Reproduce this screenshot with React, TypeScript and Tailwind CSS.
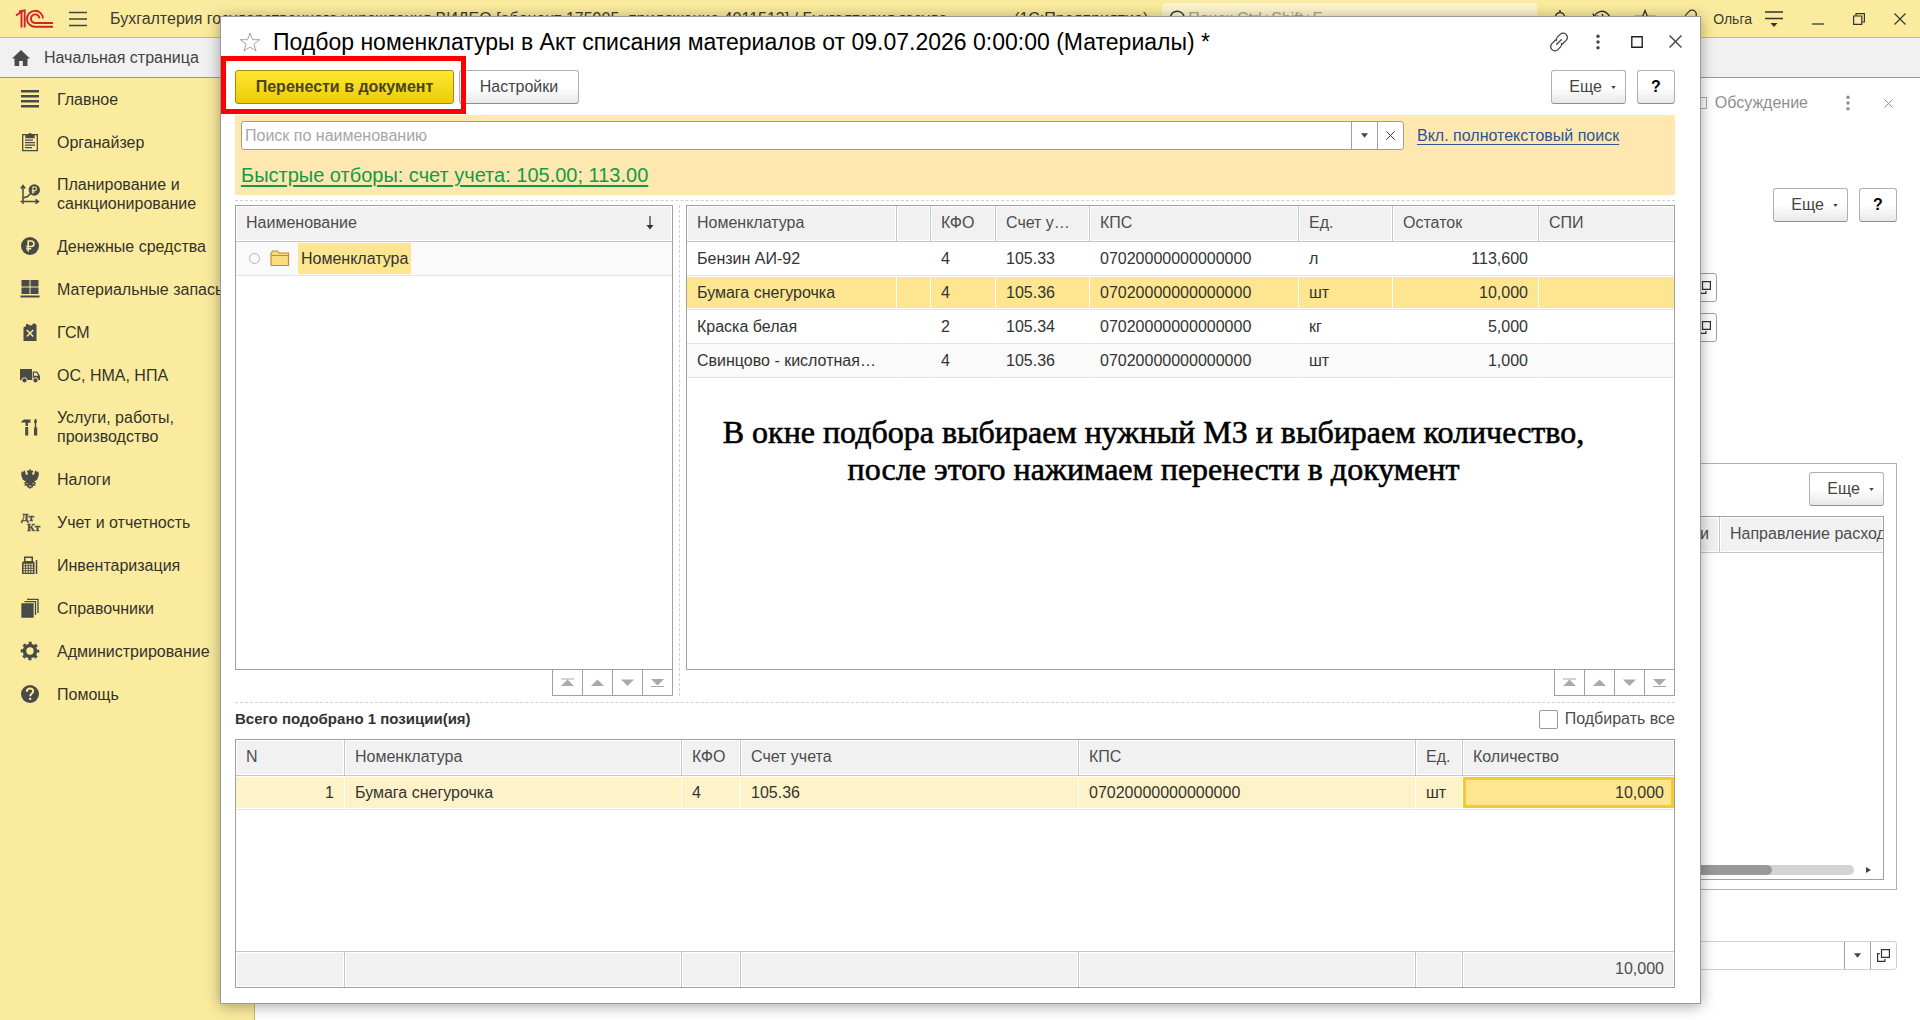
import React, { useState } from 'react';
import clsx from 'clsx';

interface MenuItem {
  label: string;
  icon: React.ReactNode;
}

interface Column {
  title: string;
  width?: string;
  right?: boolean;
}

const INK = '#4a4a46';

const MENU: MenuItem[] = [
  { label: 'Главное', icon: <path d="M1 2.2h18M1 7.2h18M1 12.2h18M1 17.2h18" stroke={INK} strokeWidth="2.4" /> },
  {
    label: 'Органайзер',
    icon: (
      <g fill="none" stroke={INK} strokeWidth="1.3">
        <path d="M2.7 2.7h14.6v16H2.7z" />
        <path d="M5 8.2h8M5 10.7h10M5 13.2h10M5 15.7h7" strokeWidth="1.2" />
        <path d="M6 5.5V2.8h2.4a1.7 1.7 0 0 1 3.2 0H14v2.7z" fill={INK} />
      </g>
    ),
  },
  {
    label: 'Планирование и санкционирование',
    icon: (
      <g fill="none" stroke={INK} strokeWidth="1.5">
        <path d="M3 20V2M.8 4.5 3 1.500l2.200 3M.5 17.500H18M15.500 15.300l3 2.200-3 2.200M3 14l4.500-1.500L11 9" />
        <circle cx="14.300" cy="6" r="5.700" fill={INK} stroke="none" />
        <path d="M12.900 9.500V3h1.900a1.700 1.700 0 0 1 0 3.500h-3M11.800 8h3" stroke="#fbeb9e" strokeWidth="1.100" />
      </g>
    ),
  },
  {
    label: 'Денежные средства',
    icon: (
      <g>
        <circle cx="10" cy="10" r="9" fill={INK} />
        <path d="M8.200 15.500V5h3a2.700 2.700 0 0 1 0 5.500H6.200M6.200 12.800h5" fill="none" stroke="#fbeb9e" strokeWidth="1.600" />
      </g>
    ),
  },
  {
    label: 'Материальные запасы',
    icon: <path d="M1.500 1h8v6.500h-8zM10.500 1h8v6.500h-8zM1.500 8.500h8V15h-8zM10.500 8.500h8V15h-8zM.5 16.500h19v2H.5z" fill={INK} />,
  },
  {
    label: 'ГСМ',
    icon: (
      <g>
        <path d="M3.500 5.500 5 4.500h1V2h2l1 1.300h3L13 1.500h2L16.500 3v16h-13z" fill={INK} />
        <path d="m6.800 8 6.400 6.500M13.200 8l-6.400 6.500" stroke="#fbeb9e" strokeWidth="1.500" />
      </g>
    ),
  },
  {
    label: 'ОС, НМА, НПА',
    icon: (
      <g fill={INK}>
        <path d="M0 4h12v11H0zM12.700 6.500h4.600L20 11v4h-7.300z" />
        <path d="M14 7.700h2.600l1.700 3H14z" fill="#fbeb9e" />
        <circle cx="4.500" cy="15.300" r="2.600" stroke="#fbeb9e" />
        <circle cx="15.500" cy="15.300" r="2.600" stroke="#fbeb9e" />
      </g>
    ),
  },
  {
    label: 'Услуги, работы, производство',
    icon: (
      <g fill={INK}>
        <path d="M1 5.500C2 3 4 2.500 6 2.500h4.500v3.300H8V9H5.500V5.500z" />
        <path d="M5.200 10h3v8.500h-3zM14.800 2h1.600l.6 3-.8 1.500V11h-1.400V6.500L14 5z" />
        <path d="M14 10.500h3.200v8H14z" />
      </g>
    ),
  },
  {
    label: 'Налоги',
    icon: (
      <g fill={INK}>
        <path d="M9.400 0h1.200v1.500h1.900l1 1.400-1.300.7.300 2.400 1.700-.6.5-2.400 1-2 .6 2 .9-1.500.4 2 1.100-1v4l-1.600 4.200-3.100 2 2.500 1.300-1.800.9 1.300 1.900-2.500-.4-1 2.100-1.300.3-1.200 1.200-1.200-1.200-1.300-.3-1-2.100-2.500.4 1.300-1.900-1.800-.9L6 12.700l-3.100-2L1.300 6.500v-4l1.100 1 .4-2 .9 1.500.6-2 1 2 .5 2.400 1.700.6.3-2.400-1.300-.7 1-1.400h1.900z" />
        <path d="M6.200 14.500h1.300M12.500 14.500h1.300M8.500 17h3" stroke="#fbeb9e" strokeWidth=".8" />
      </g>
    ),
  },
  {
    label: 'Учет и отчетность',
    icon: (
      <g fill={INK} stroke={INK} strokeWidth=".3" fontFamily="Liberation Serif, serif" fontWeight="bold" fontSize="11">
        <text x="1" y="9">Дт</text>
        <text x="7" y="19">Кт</text>
      </g>
    ),
  },
  {
    label: 'Инвентаризация',
    icon: (
      <g>
        <path d="M2 7.500 4 6V1.500h9V6l1.500 1.500V19H2z" fill={INK} />
        <path d="M5.500 3h6v3h-6z" fill="#fbeb9e" />
        <path d="M3.500 9.500h9.500M3.500 12h9.500M3.500 14.500h9.500M3.500 17h9.500" stroke="#fbeb9e" strokeWidth="1.400" strokeDasharray="1.700 .9" />
        <path d="M16.500 5v14" stroke={INK} strokeWidth="1.500" />
      </g>
    ),
  },
  {
    label: 'Справочники',
    icon: (
      <g fill="none" stroke={INK} strokeWidth="1.300">
        <path d="M2 6h11v13H2z" fill={INK} />
        <path d="M4.500 3.700h11V17M7 1.400h11V15" />
      </g>
    ),
  },
  {
    label: 'Администрирование',
    icon: (
      <g fill="none" stroke={INK}>
        <circle cx="10" cy="10" r="5.500" strokeWidth="3.600" />
        <circle cx="10" cy="10" r="8.100" strokeWidth="2.400" strokeDasharray="3.180 3.180" strokeDashoffset="1.590" />
      </g>
    ),
  },
  {
    label: 'Помощь',
    icon: (
      <g>
        <circle cx="10" cy="10" r="9" fill={INK} />
        <path d="M6.800 7.800c0-4.300 6.400-4.200 6.400-.6 0 2.300-3 2.400-3 5M10.200 13.800v2.200" fill="none" stroke="#fbeb9e" strokeWidth="2" />
      </g>
    ),
  },
];

const STOCK_COLUMNS: Column[] = [
  { title: 'Номенклатура', width: 'w-[210px]' },
  { title: '', width: 'w-[34px]' },
  { title: 'КФО', width: 'w-[65px]' },
  { title: 'Счет у…', width: 'w-[94px]' },
  { title: 'КПС', width: 'w-[209px]' },
  { title: 'Ед.', width: 'w-[94px]' },
  { title: 'Остаток', width: 'w-[146px]', right: true },
  { title: 'СПИ' },
];

const STOCK_ROWS = [
  ['Бензин АИ-92', '', '4', '105.33', '07020000000000000', 'л', '113,600', ''],
  ['Бумага снегурочка', '', '4', '105.36', '07020000000000000', 'шт', '10,000', ''],
  ['Краска белая', '', '2', '105.34', '07020000000000000', 'кг', '5,000', ''],
  ['Свинцово - кислотная…', '', '4', '105.36', '07020000000000000', 'шт', '1,000', ''],
];

const PICKED_COLUMNS: Column[] = [
  { title: 'N', width: 'w-[109px]', right: true },
  { title: 'Номенклатура', width: 'w-[337px]' },
  { title: 'КФО', width: 'w-[59px]' },
  { title: 'Счет учета', width: 'w-[338px]' },
  { title: 'КПС', width: 'w-[337px]' },
  { title: 'Ед.', width: 'w-[47px]' },
  { title: 'Количество' },
];

const PICKED_ROW = ['1', 'Бумага снегурочка', '4', '105.36', '07020000000000000', 'шт'];

function Svg({ size, children, className }: { size: string; children: React.ReactNode; className?: string }) {
  return (
    <svg viewBox={size} className={clsx('shrink-0 overflow-visible', className)} aria-hidden="true">
      {children}
    </svg>
  );
}

function Logo() {
  return (
    <Svg size="0 0 38 20" className="h-5 w-[38px]">
      <g fill="none" stroke="#d2232a" strokeWidth="1.9">
        <path d="M0 6.500 5.500 2.800V18.500" />
        <path d="M3 2.500 8.700 1.500V18.500" />
        <path d="M27 9.500A8 8 0 1 0 19.500 17.800H37" />
        <path d="M23.500 9.500A4.300 4.300 0 1 0 19.500 14H37" />
      </g>
    </Svg>
  );
}

function Cross({ className }: { className?: string }) {
  return (
    <Svg size="0 0 12 12" className={className}>
      <path d="M.5.5l11 11M11.500.5l-11 11" stroke="currentColor" strokeWidth="1.300" />
    </Svg>
  );
}

function Dots({ className }: { className?: string }) {
  return (
    <Svg size="0 0 4 16" className={clsx('h-4 w-1', className)}>
      <g fill="currentColor">
        <circle cx="2" cy="2.200" r="1.700" />
        <circle cx="2" cy="8" r="1.700" />
        <circle cx="2" cy="13.800" r="1.700" />
      </g>
    </Svg>
  );
}

function Caret() {
  return (
    <Svg size="0 0 8 5" className="h-[5px] w-[7px]">
      <path d="M0 0h8L4 5z" fill="#444" />
    </Svg>
  );
}

function LinkIcon() {
  return (
    <Svg size="0 0 20 20" className="size-5">
      <g fill="none" stroke="currentColor" strokeWidth="1.300" strokeLinecap="round">
        <path d="M7.500 8.500c-.4-1.300 0-2.500.9-3.400l2.700-2.700a4.200 4.200 0 0 1 6 0c1.700 1.700 1.700 4.300 0 6l-3.600 3.600" />
        <path d="M12.500 11.500c.4 1.300 0 2.500-.9 3.400l-2.700 2.700a4.200 4.200 0 0 1-6 0c-1.700-1.700-1.700-4.300 0-6L6.500 8" />
        <path d="m7.700 12.300 4.600-4.600" />
      </g>
    </Svg>
  );
}

function OpenIcon() {
  return (
    <Svg size="0 0 13 13" className="size-[13px]">
      <path d="M4.500.6h7.900v7.800H4.500zM2.800 4.600H.6v7.800h7.300V10" fill="none" stroke="#333" strokeWidth="1.200" />
    </Svg>
  );
}

const BUTTON = 'flex h-[34px] items-center justify-center rounded-[3px] border border-[#b0b0b0] border-b-[#8f8f8f] bg-linear-to-b from-white from-50% to-[#e8e8e8] text-[#444]';

function MoreButton() {
  return (
    <button className={clsx(BUTTON, 'w-[75px] gap-[9px] pl-2')}>
      Еще
      <Svg size="0 0 6 4" className="h-[3px] w-[5px]">
        <path d="M0 0h6L3 4z" fill="#444" />
      </Svg>
    </button>
  );
}

function HelpButton() {
  return (
    <button className={clsx(BUTTON, 'w-[38px] font-bold')}>
      <span className="text-black">?</span>
    </button>
  );
}

const SCROLL_STEPS = [
  { label: 'В начало', d: 'M0 .5h13v1H0zM6.500 1.500 13 8H0z' },
  { label: 'Вверх', d: 'M6.500 1.500 13 8H0z' },
  { label: 'Вниз', d: 'M0 1.500h13L6.500 8z' },
  { label: 'В конец', d: 'M0 1h13L6.500 7.500zM0 8h13v1H0z' },
];

function ScrollButtons() {
  return (
    <div className="flex self-end border-r border-[#a0a0a0]">
      {SCROLL_STEPS.map(({ label, d }) => (
        <button key={label} aria-label={label} className="flex h-[26px] w-[30px] items-center justify-center border-b border-l border-[#a0a0a0]">
          <Svg size="0 0 13 9" className="h-[9px] w-[13px]">
            <path d={d} fill="#a9a9a9" />
          </Svg>
        </button>
      ))}
    </div>
  );
}

const HEAD_CELL = 'h-9 truncate border-b border-[#c6c6c6] bg-[#f1f1f1] px-[10px] pb-[2px] text-left font-normal text-[#4d4d4d] shadow-[inset_0_0_0_1px_#fff] not-last:border-r';
const CELL = 'h-[34px] truncate border-b border-b-[#e4e4e4] px-[10px] not-last:border-r';

function Head({ columns }: { columns: Column[] }) {
  return (
    <>
      <colgroup>
        {columns.map((c, i) => <col key={i} className={c.width} />)}
      </colgroup>
      <thead>
        <tr>
          {columns.map((c, i) => <th key={i} className={HEAD_CELL}>{c.title}</th>)}
        </tr>
      </thead>
    </>
  );
}

function StockTable() {
  const [selected, setSelected] = useState(1);

  return (
    <table className="w-full table-fixed border-separate border-spacing-0">
      <Head columns={STOCK_COLUMNS} />
      <tbody>
        {STOCK_ROWS.map((row, r) => (
          <tr key={r} onClick={() => setSelected(r)}>
            {row.map((value, c) => (
              <td
                key={c}
                className={clsx(
                  CELL,
                  STOCK_COLUMNS[c].right && 'text-right',
                  r === selected
                    ? 'border-r-white bg-[#fde68f] shadow-[inset_0_1px_#fff,inset_0_-1px_#fff]'
                    : 'border-r-transparent',
                  r === 3 && r !== selected && 'bg-[#fafafa]',
                )}
              >
                {value}
              </td>
            ))}
          </tr>
        ))}
      </tbody>
    </table>
  );
}

function PickedTable() {
  const [amount, setAmount] = useState('10,000');

  return (
    <table className="h-full w-full table-fixed border-separate border-spacing-0">
      <Head columns={PICKED_COLUMNS} />
      <tbody>
        <tr>
          {PICKED_ROW.map((value, c) => (
            <td key={c} className={clsx(CELL, 'border-r-white bg-[#fef3c8] shadow-[inset_0_1px_#fff,inset_0_-1px_#fff]', c === 0 && 'text-right')}>
              {value}
            </td>
          ))}
          <td className="h-[34px] border-b border-[#e4e4e4] py-px">
            <input
              aria-label="Количество"
              value={amount}
              onChange={(e) => setAmount(e.target.value)}
              className="block h-[31px] w-full border-3 border-[#f5ca2e] bg-[#fde68f] px-[7px] text-right outline-none"
            />
          </td>
        </tr>
        <tr>
          <td colSpan={7} />
        </tr>
      </tbody>
      <tfoot>
        <tr>
          {PICKED_COLUMNS.map((c, i) => (
            <td key={i} className="h-9 border-t border-[#c6c6c6] bg-[#f1f1f1] px-[10px] pb-[2px] text-right text-[#4d4d4d] shadow-[inset_0_0_0_1px_#fff] not-last:border-r">
              {i === 6 && amount}
            </td>
          ))}
        </tr>
      </tfoot>
    </table>
  );
}

function TopBar() {
  return (
    <header className="flex h-[38px] shrink-0 items-center border-b border-[#c9bd6c] bg-[#fbeb9e] pl-4 text-[#3c3c34]">
      <Logo />
      <button aria-label="Меню" className="ml-[15px]">
        <Svg size="0 0 18 16" className="h-4 w-[18px]">
          <path d="M0 1.500h18M0 8h18M0 14.500h18" stroke="#44443c" strokeWidth="1.300" />
        </Svg>
      </button>
      <div className="ml-[23px] flex flex-1 justify-between whitespace-nowrap pr-[14px]">
        <span>Бухгалтерия государственного учреждения ВИДЕО [абонент 175905, приложение 4011513] / Бухгалтерия госуда...</span>
        <span>(1С:Предприятие)</span>
      </div>
      <label className="flex h-8 w-[375px] items-center gap-1 rounded-[3px] bg-[#fdf5cd] pl-1">
        <Svg size="0 0 18 18" className="size-[18px]">
          <path d="M2 17l3-3.500M9.500 1.500a7 7 0 1 1 0 13.500 7 7 0 0 1 0-13.500z" fill="none" stroke="#333" strokeWidth="1.400" />
        </Svg>
        <input aria-label="Поиск" placeholder="Поиск Ctrl+Shift+F" className="min-w-0 flex-1 outline-none placeholder:text-[#a9a48a]" />
      </label>
      <div className="ml-[14px] flex w-[147px] shrink-0 items-center justify-between">
        <Svg size="0 0 18 20" className="h-5 w-[18px]">
          <path d="M9 1v2M3 15.500V13l1.500-2V8a4.500 4.500 0 0 1 9 0v3l1.500 2v2.500z" fill="none" stroke="#333" strokeWidth="1.500" />
        </Svg>
        <Svg size="0 0 20 20" className="size-5">
          <path d="M2.500 7.500a8 8 0 1 1-.5 3.500M1 4.500l1.500 3.800 3.800-1.300M10.500 5v5.500h4" fill="none" stroke="#333" strokeWidth="1.400" />
        </Svg>
        <Svg size="0 0 20 20" className="size-5">
          <path d="M10 1.500l2.400 6h6.300l-5 4 2 6.500-5.700-4-5.700 4 2-6.500-5-4h6.300z" fill="none" stroke="#333" strokeWidth="1.300" />
        </Svg>
        <LinkIcon />
      </div>
      <span className="ml-[15px] text-sm">Ольга</span>
      <div className="ml-[13px] mr-[14px] flex shrink-0 items-center gap-[29px]">
        <Svg size="0 0 18 16" className="h-4 w-[18px]">
          <path d="M0 1h18M0 7.500h18" stroke="#333" strokeWidth="1.300" />
          <path d="M5.500 12h7L9 16z" fill="#333" />
        </Svg>
        <Svg size="0 0 12 12" className="size-3">
          <path d="M0 11h12" stroke="#333" strokeWidth="1.300" />
        </Svg>
        <Svg size="0 0 12 12" className="size-3">
          <path d="M.6 3h8.200v8.400H.6zM3 3V.6h8.400V9H9" fill="none" stroke="#333" strokeWidth="1.200" />
        </Svg>
        <Cross className="size-3" />
      </div>
    </header>
  );
}

function Sidebar() {
  return (
    <nav className="w-[255px] shrink-0 border-r border-[#c9bd6c] bg-[#fbeb9e]">
      {MENU.map(({ label, icon }) => (
        <a key={label} href="#" className="flex items-center gap-[17px] pb-3 pl-5 pt-[11px] leading-[19px] text-[#33332c]">
          <Svg size="0 0 20 20" className="size-5">{icon}</Svg>
          <span className={clsx(label.length > 22 ? 'w-[160px]' : 'whitespace-nowrap')}>{label}</span>
        </a>
      ))}
    </nav>
  );
}

// Document form left open behind the picking dialog
function DocumentForm() {
  return (
    <main className="flex min-w-0 flex-1 flex-col items-end bg-white pb-[50px] pr-[23px]">
      <div className="flex h-[50px] items-center pr-1 text-[#8f8f8f]">
        <span className="mr-2 size-3 border border-[#aaa]" />
        Обсуждение
        <Dots className="ml-[38px]" />
        <Cross className="ml-[34px] size-[9px]" />
      </div>
      <div className="mt-[60px] flex gap-[11px]">
        <MoreButton />
        <HelpButton />
      </div>
      <div className="mr-[180px] mt-[51px] flex flex-col gap-[11px]">
        {['Организация', 'Подразделение'].map((name) => (
          <button key={name} aria-label={name} className="flex h-[29px] w-[26px] items-center justify-center rounded-[3px] border border-[#a0a0a0]">
            <OpenIcon />
          </button>
        ))}
      </div>
      <section className="mt-[121px] flex w-full min-w-0 flex-1 flex-col items-end border border-[#b0b0b0] px-3 pb-[9px] pt-2">
        <MoreButton />
        <div className="mt-[10px] flex w-full flex-1 flex-col border border-[#a0a0a0]">
          <table className="w-full table-fixed border-separate border-spacing-0">
            <thead>
              <tr>
                <th className="h-9 border-b border-r border-[#c6c6c6] bg-[#f1f1f1] px-[10px] pb-[2px] text-right font-normal text-[#4d4d4d] shadow-[inset_0_0_0_1px_#fff]">Статья и категории</th>
                <th className="h-9 w-[163px] overflow-hidden whitespace-nowrap border-b border-[#c6c6c6] bg-[#f1f1f1] pb-[2px] pl-[10px] text-left font-normal text-[#4d4d4d] shadow-[inset_0_0_0_1px_#fff]">Направление расходования</th>
              </tr>
            </thead>
          </table>
          <div className="mb-1 mt-auto flex items-center pr-3">
            <div className="h-[10px] flex-1 rounded-full bg-[#d4d4d4]">
              <div className="mr-[82px] h-full rounded-full bg-[#999]" />
            </div>
            <Svg size="0 0 5 6" className="ml-3 h-[6px] w-[5px]">
              <path d="M0 0l5 3-5 3z" fill="#444" />
            </Svg>
          </div>
        </div>
      </section>
      <div className="mt-[51px] flex h-[29px] w-full rounded-[3px] border border-[#cfcfcf]">
        <input aria-label="Ответственный" className="min-w-0 flex-1 outline-none" />
        <button aria-label="Выбрать" className="flex w-[26px] items-center justify-center border-l border-[#a0a0a0]"><Caret /></button>
        <button aria-label="Открыть" className="flex w-[26px] items-center justify-center border-l border-[#a0a0a0]"><OpenIcon /></button>
      </div>
    </main>
  );
}

function PickDialog() {
  const [query, setQuery] = useState('');
  const [pickAll, setPickAll] = useState(false);

  return (
    <div role="dialog" className="absolute bottom-4 left-[220px] right-[219px] top-4 flex flex-col border border-[#999] bg-white pb-[15px] pl-[14px] pr-[25px] text-[#333] shadow-[0_2px_14px_rgba(0,0,0,0.35)]">
      <div className="flex h-[53px] shrink-0 items-center pb-1">
        <button aria-label="Избранное" className="ml-1">
          <Svg size="0 0 22 20" className="h-5 w-[22px]">
            <path d="M11 1l2.500 6.700h7.200l-5.800 4.400 2.200 7L11 15l-6.100 4.100 2.200-7L1.300 7.700h7.200z" fill="none" stroke="#a3a3a3" />
          </Svg>
        </button>
        <h1 className="ml-3 flex-1 truncate text-[23px] leading-7 text-black">
          Подбор номенклатуры в Акт списания материалов от 09.07.2026 0:00:00 (Материалы) *
        </h1>
        <div className="flex items-center text-[#444]">
          <LinkIcon />
          <Dots className="ml-[27px]" />
          <Svg size="0 0 12 12" className="ml-[31px] size-3">
            <path d="M.8.8h10.400v10.400H.8z" fill="none" stroke="#222" strokeWidth="1.400" />
          </Svg>
          <Cross className="-mr-[7px] ml-[26px] size-[13px]" />
        </div>
      </div>

      <div className="flex shrink-0 items-start pb-[11px]">
        <div className="relative">
          <button className="h-[34px] w-[219px] rounded-[3px] border border-[#9c8c14] bg-linear-to-b from-[#ffe72e] to-[#eccd00] font-bold text-[#4a4420]">
            Перенести в документ
          </button>
          <div className="pointer-events-none absolute -bottom-[10px] -left-[14px] -right-3 -top-[14px] z-10 border-5 border-[#fe0000]" />
        </div>
        <button className={clsx(BUTTON, 'ml-[5px] w-[120px]')}>Настройки</button>
        <div className="ml-auto flex gap-[11px]">
          <MoreButton />
          <HelpButton />
        </div>
      </div>

      <div className="flex h-20 shrink-0 flex-col justify-between bg-[#fee8b0] px-[6px] pb-2 pt-[6px]">
        <div className="flex items-center gap-[13px]">
          <div className="flex h-[29px] w-[1163px] min-w-0 rounded-[3px] border border-[#a39c88] bg-white">
            <input
              aria-label="Поиск по наименованию"
              placeholder="Поиск по наименованию"
              value={query}
              onChange={(e) => setQuery(e.target.value)}
              className="min-w-0 flex-1 pl-[3px] outline-none placeholder:text-[#a6a6a6]"
            />
            <button aria-label="История поиска" className="flex w-[26px] items-center justify-center border-l border-[#a0a0a0]"><Caret /></button>
            <button aria-label="Очистить" onClick={() => setQuery('')} className="flex w-[26px] items-center justify-center border-l border-[#a0a0a0]">
              <Cross className="size-[9px]" />
            </button>
          </div>
          <a href="#" className="whitespace-nowrap text-[#2d5593] underline underline-offset-3">Вкл. полнотекстовый поиск</a>
        </div>
        <a href="#" className="self-start text-[20px] leading-6 text-[#129b48] underline underline-offset-3">
          Быстрые отборы: счет учета: 105.00; 113.00
        </a>
      </div>

      <div className="mt-[5px] shrink-0 border-t border-dashed border-[#d0d0d0]" />

      <div className="mt-1 flex min-h-0 flex-1">
        <div className="flex w-[438px] shrink-0 flex-col">
          <div className="flex-1 border border-[#a0a0a0]">
            <table className="w-full table-fixed border-separate border-spacing-0">
              <thead>
                <tr>
                  <th className={HEAD_CELL}>
                    <div className="flex items-center justify-between pr-2">
                      Наименование
                      <Svg size="0 0 8 14" className="h-[14px] w-2">
                        <path d="M4 0v11" stroke="#333" strokeWidth="1.200" />
                        <path d="M.5 9h7L4 13.500z" fill="#333" />
                      </Svg>
                    </div>
                  </th>
                </tr>
              </thead>
              <tbody>
                <tr>
                  <td className={clsx(CELL, 'bg-[#fafafa]')}>
                    <div className="flex items-center pl-[3px]">
                      <span className="size-[11px] rounded-full border border-[#b5b5b5]" />
                      <Svg size="0 0 20 17" className="ml-[10px] h-[17px] w-5">
                        <path d="M1 15V3.500L2.500 1h5L9 3h9.500v12.500h-17z" fill="#fbdc7c" stroke="#c08c3a" strokeWidth="1.200" />
                        <path d="M1.500 5.500h17" stroke="#c08c3a" />
                      </Svg>
                      <span className="ml-2 bg-[#fde68f] px-[3px] leading-[31px]">Номенклатура</span>
                    </div>
                  </td>
                </tr>
              </tbody>
            </table>
          </div>
          <ScrollButtons />
        </div>
        <div className="mx-[6px] border-l border-dashed border-[#d0d0d0]" />
        <div className="flex min-w-0 flex-1 flex-col">
          <div className="relative flex-1 border border-[#a0a0a0]">
            <StockTable />
            <p className="pointer-events-none absolute left-0 right-[54px] top-[208px] text-center font-['Liberation_Serif',serif] text-[32px] leading-[37px] text-black [-webkit-text-stroke:0.6px_#000]">
              В окне подбора выбираем нужный МЗ и выбираем количество,
              <br />
              после этого нажимаем перенести в документ
            </p>
          </div>
          <ScrollButtons />
        </div>
      </div>

      <div className="mt-[6px] shrink-0 border-t border-dashed border-[#d0d0d0]" />

      <div className="flex h-9 shrink-0 items-center justify-between pb-1">
        <span className="text-[15px] font-bold">Всего подобрано 1 позиции(ия)</span>
        <label className="flex items-center gap-[7px] text-[#4d4d4d]">
          <input
            type="checkbox"
            checked={pickAll}
            onChange={(e) => setPickAll(e.target.checked)}
            className="size-[19px] appearance-none rounded-[2px] border border-[#999] bg-white checked:bg-[#fde68f]"
          />
          Подбирать все
        </label>
      </div>

      <div className="h-[249px] shrink-0 border border-[#a0a0a0]">
        <PickedTable />
      </div>
    </div>
  );
}

export default function App() {
  return (
    <div className="relative flex h-screen flex-col overflow-hidden bg-white font-['Liberation_Sans',Arial,sans-serif] text-base leading-5">
      <TopBar />
      <div className="flex h-10 shrink-0 items-center gap-[14px] border-b border-[#999] bg-[#f1f1f1] pl-3 text-[#444]">
        <Svg size="0 0 18 16" className="h-4 w-[18px]">
          <path d="M9 0l9 8.500h-2.500V16h-4.700v-5H7.200v5H2.500V8.500H0z" fill="#4a4a4a" />
        </Svg>
        Начальная страница
      </div>
      <div className="flex min-h-0 flex-1">
        <Sidebar />
        <DocumentForm />
      </div>
      <PickDialog />
    </div>
  );
}
